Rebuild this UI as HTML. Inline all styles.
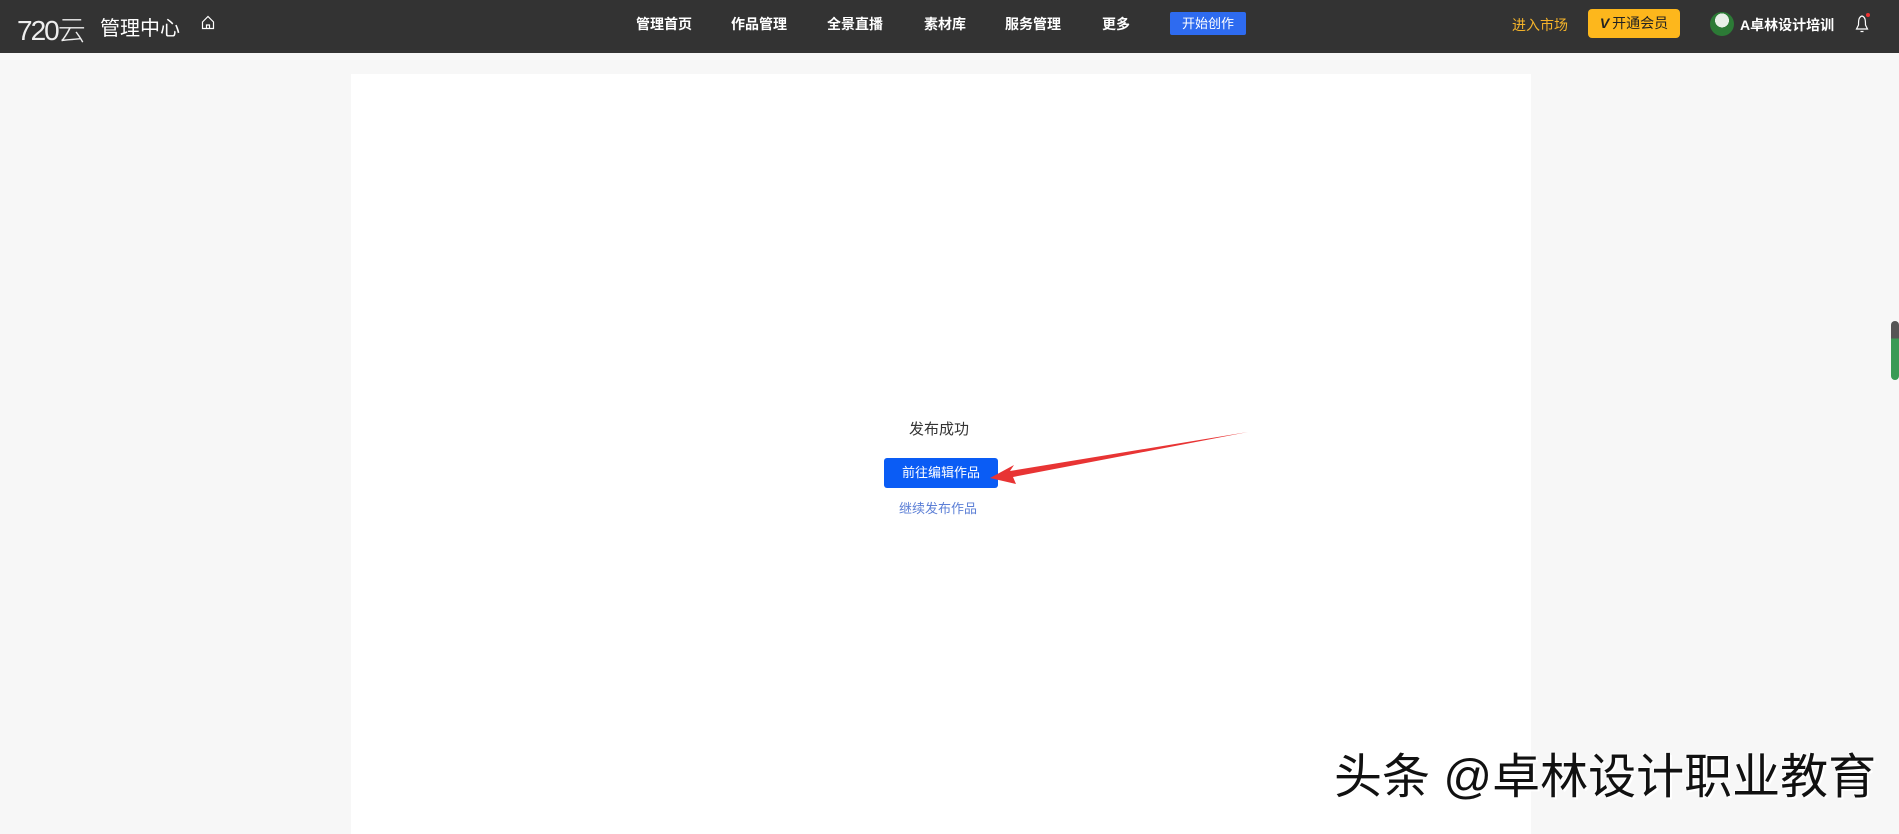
<!DOCTYPE html>
<html><head><meta charset="utf-8"><style>
*{margin:0;padding:0;box-sizing:border-box}
body{width:1899px;height:821px;background:#f7f7f7;font-family:"Liberation Sans","Noto Sans CJK SC",sans-serif;position:relative;overflow:hidden}
.hd{position:absolute;left:0;top:0;width:1899px;height:53px;background:#333;color:#fff}
.a{position:absolute;white-space:nowrap}
.nav{font-size:14px;font-weight:bold;top:14px}
.panel{position:absolute;left:351px;top:74px;width:1180px;height:760px;background:#fff}
</style></head><body>
<div class="hd">
<div class="a" style="left:17px;top:9px;font-size:28px;font-weight:300;letter-spacing:-2px;color:#eee">720云</div>
<div class="a" style="left:100px;top:12px;font-size:20px">管理中心</div>
<svg class="a" style="left:201px;top:15px" width="14" height="15" viewBox="0 0 14 15"><path d="M1.5 7 L7 1.5 L12.5 7 V13.5 H1.5 Z M5.5 13.5 V10 H8.5 V13.5" fill="none" stroke="#fff" stroke-width="1.2"/></svg>
<div class="a nav" style="left:636px">管理首页</div>
<div class="a nav" style="left:731px">作品管理</div>
<div class="a nav" style="left:827px">全景直播</div>
<div class="a nav" style="left:924px">素材库</div>
<div class="a nav" style="left:1005px">服务管理</div>
<div class="a nav" style="left:1102px">更多</div>
<div class="a" style="left:1170px;top:12px;width:76px;height:23px;background:#2e6bf0;border-radius:2px;font-size:13px;line-height:23px;text-align:center">开始创作</div>
<div class="a" style="left:1512px;top:15px;font-size:14px;color:#f4b32a">进入市场</div>
<div class="a" style="left:1588px;top:9px;width:92px;height:29px;background:#fdb71c;border-radius:4px;color:#222;font-size:14px;line-height:29px;text-align:center"><b style="font-style:italic;margin-right:3px">V</b>开通会员</div>
<div class="a" style="left:1710px;top:12px;width:24px;height:24px;border-radius:50%;background:radial-gradient(circle at 50% 35%,#e8efe8 0 35%,#2c7a36 36%)"></div>
<div class="a" style="left:1740px;top:15px;font-size:14px;font-weight:bold">A卓林设计培训</div>
<svg class="a" style="left:1854px;top:12px" width="18" height="22" viewBox="0 0 18 22"><path d="M8 4 C4.5 5 4.5 9 4.5 13 L2.5 17 H13.5 L11.5 13 C11.5 9 11.5 5 8 4 Z M6.5 19.5 H9.5" fill="none" stroke="#fff" stroke-width="1.2"/><circle cx="14" cy="3" r="2" fill="#e33"/></svg>
</div>
<div class="panel"></div>
<div class="a" style="left:909px;top:418px;font-size:15px;color:#333">发布成功</div>
<div class="a" style="left:884px;top:458px;width:114px;height:30px;background:#0a5cf5;border-radius:3px;color:#fff;font-size:13px;line-height:30px;text-align:center">前往编辑作品</div>
<div class="a" style="left:899px;top:498px;font-size:13px;color:#5c7fd6">继续发布作品</div>
<svg class="a" style="left:0;top:0" width="1899" height="821"><polygon points="1248,432 1010,471 1014,465 990,478 1016,484 1013,477" fill="#e83434"/></svg>
<div class="a" style="left:1334px;top:737px;font-size:48px;color:#111;text-shadow:2px 2px 0 #fff,-1px -1px 0 #fff">头条 @卓林设计职业教育</div>
<div class="a" style="left:1891px;top:321px;width:8px;height:59px;border-radius:4px;background:linear-gradient(#555 0 30%,#3a9a55 30%)"></div>
</body></html>
